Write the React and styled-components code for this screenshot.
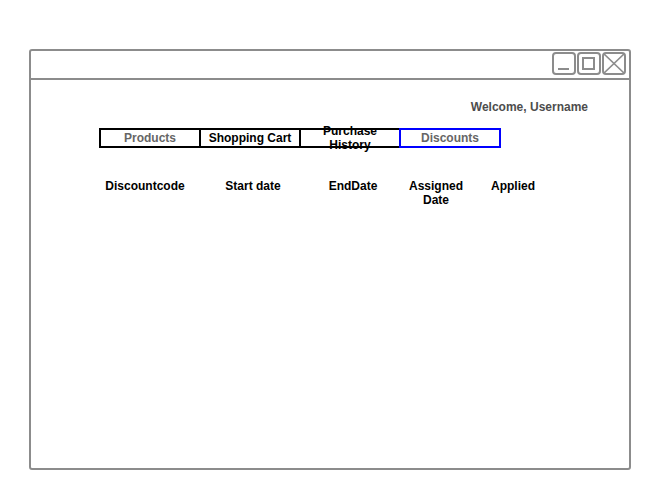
import React from "react";
import styled, { createGlobalStyle } from "styled-components";

const Global = createGlobalStyle`
  body {
    margin: 0;
    background: #fff;
    font-family: "Liberation Sans", Arial, sans-serif;
  }
`;

const Window = styled.div`
  box-sizing: border-box;
  width: 602px;
  height: 421px;
  margin: 49px 0 0 29px;
  border: 2px solid #8c8c8c;
  border-radius: 3px;
  display: flex;
  flex-direction: column;
`;

const TitleBar = styled.div`
  height: 26px;
  flex-shrink: 0;
  border-bottom: 2px solid #8c8c8c;
  display: flex;
  justify-content: flex-end;
  align-items: flex-start;
  gap: 1px;
  padding: 1px 3px 0 0;
`;

const WinButton = styled.div`
  box-sizing: border-box;
  width: 24px;
  height: 23px;
  border: 2px solid #8c8c8c;
  border-radius: 4px;
  display: flex;
  align-items: center;
  justify-content: center;
  svg {
    display: block;
  }
`;

const Body = styled.div`
  padding: 20px 41px 0 68px;
`;

const Welcome = styled.div`
  text-align: right;
  font-weight: bold;
  font-size: 12px;
  line-height: 14px;
  color: #4d4d4d;
`;

const Tabs = styled.div`
  display: flex;
  margin-top: 14px;
`;

const Tab = styled.div`
  box-sizing: border-box;
  width: 102px;
  height: 20px;
  margin-left: -2px;
  &:first-child {
    margin-left: 0;
  }
  border: 2px solid ${(p) => (p.$active ? "#0000ff" : "#000")};
  display: flex;
  align-items: center;
  justify-content: center;
  text-align: center;
  font-weight: bold;
  font-size: 12px;
  line-height: 14px;
  color: ${(p) => (p.$muted ? "#666" : "#000")};
`;

const HeaderRow = styled.div`
  display: grid;
  grid-template-columns: 108px 108px 92px 74px 80px;
  margin: 31px 0 0 -8px;
`;

const HeaderCell = styled.div`
  text-align: center;
  font-weight: bold;
  font-size: 12px;
  line-height: 14px;
  color: #000;
`;

const tabs = [
  { label: "Products", muted: true },
  { label: "Shopping Cart" },
  { label: "Purchase History" },
  { label: "Discounts", muted: true, active: true },
];

const columns = ["Discountcode", "Start date", "EndDate", "Assigned Date", "Applied"];

export default function App() {
  return (
    <>
      <Global />
      <Window>
        <TitleBar>
          <WinButton>
            <svg width="20" height="19" viewBox="0 0 20 19">
              <line x1="4" y1="15" x2="15" y2="15" stroke="#8c8c8c" strokeWidth="2" />
            </svg>
          </WinButton>
          <WinButton>
            <svg width="20" height="19" viewBox="0 0 20 19">
              <rect x="4" y="4" width="11" height="11" fill="none" stroke="#8c8c8c" strokeWidth="2" />
            </svg>
          </WinButton>
          <WinButton>
            <svg width="20" height="19" viewBox="0 0 20 19">
              <line x1="0" y1="0" x2="20" y2="19" stroke="#8c8c8c" strokeWidth="1.6" />
              <line x1="20" y1="0" x2="0" y2="19" stroke="#8c8c8c" strokeWidth="1.6" />
            </svg>
          </WinButton>
        </TitleBar>
        <Body>
          <Welcome>Welcome, Username</Welcome>
          <Tabs>
            {tabs.map((t) => (
              <Tab key={t.label} $muted={t.muted} $active={t.active}>
                {t.label}
              </Tab>
            ))}
          </Tabs>
          <HeaderRow>
            {columns.map((c) => (
              <HeaderCell key={c}>{c}</HeaderCell>
            ))}
          </HeaderRow>
        </Body>
      </Window>
    </>
  );
}
